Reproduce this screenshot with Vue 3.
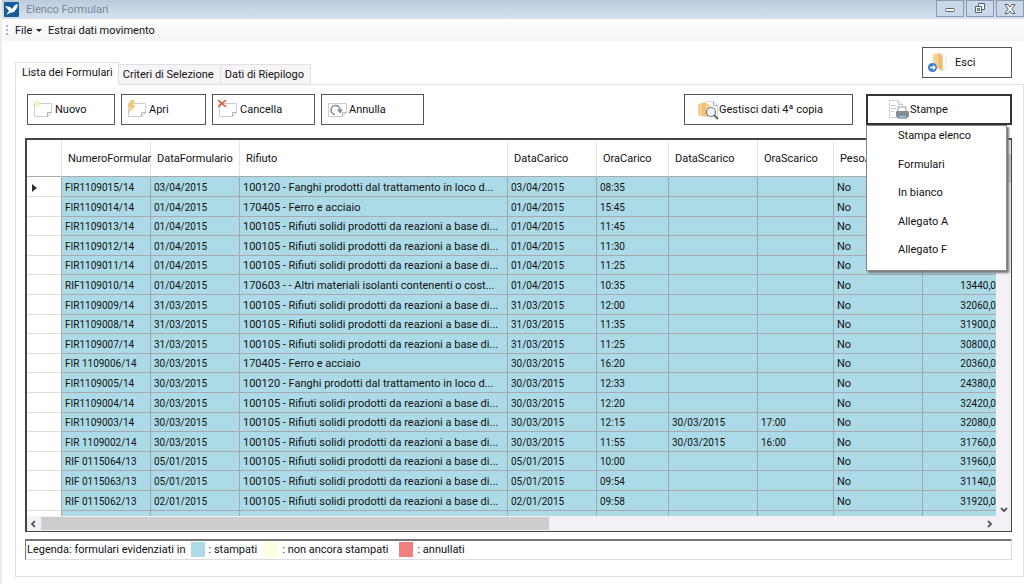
<script setup>
const cols = ['NumeroFormular', 'DataFormulario', 'Rifiuto', 'DataCarico', 'OraCarico', 'DataScarico', 'OraScarico', 'PesoA', '']
const A = '100105 - Rifiuti solidi prodotti da reazioni a base di...'
const B = '100120 - Fanghi prodotti dal trattamento in loco d...'
const F = '170405 - Ferro e acciaio'
const rows = [
  ['FIR1109015/14', '03/04/2015', B, '08:35', '', '', ''],
  ['FIR1109014/14', '01/04/2015', F, '15:45', '', '', ''],
  ['FIR1109013/14', '01/04/2015', A, '11:45', '', '', ''],
  ['FIR1109012/14', '01/04/2015', A, '11:30', '', '', ''],
  ['FIR1109011/14', '01/04/2015', A, '11:25', '', '', ''],
  ['RIF1109010/14', '01/04/2015', '170603 - - Altri materiali isolanti contenenti o cost...', '10:35', '', '', '13440,0'],
  ['FIR1109009/14', '31/03/2015', A, '12:00', '', '', '32060,0'],
  ['FIR1109008/14', '31/03/2015', A, '11:35', '', '', '31900,0'],
  ['FIR1109007/14', '31/03/2015', A, '11:25', '', '', '30800,0'],
  ['FIR 1109006/14', '30/03/2015', F, '16:20', '', '', '20360,0'],
  ['FIR1109005/14', '30/03/2015', B, '12:33', '', '', '24380,0'],
  ['FIR1109004/14', '30/03/2015', A, '12:20', '', '', '32420,0'],
  ['FIR1109003/14', '30/03/2015', A, '12:15', '30/03/2015', '17:00', '32080,0'],
  ['FIR 1109002/14', '30/03/2015', A, '11:55', '30/03/2015', '16:00', '31760,0'],
  ['RIF 0115064/13', '05/01/2015', A, '10:00', '', '', '31960,0'],
  ['RIF 0115063/13', '05/01/2015', A, '09:54', '', '', '31140,0'],
  ['RIF 0115062/13', '02/01/2015', A, '09:58', '', '', '31920,0'],
]
const items = ['Stampa elenco', 'Formulari', 'In bianco', 'Allegato A', 'Allegato F']
</script>

<template>
  <div class="window">
    <header class="title">
      <svg class="logo" width="15" height="15" viewBox="0 0 15 15"><rect width="15" height="15" rx="1" fill="#165c98" /><path d="M1 4l5 1 2 2 3-4 3-1-1 4-3 4-4 1-4 2 3-4z" fill="#fff" /></svg>
      <h1>Elenco Formulari</h1>
      <div class="wbtns">
        <button aria-label="Riduci"><svg width="12" height="10" viewBox="0 0 12 10"><rect x="1.5" y="4.500" width="9" height="3" rx="1" fill="#fff" stroke="#59616e" /></svg></button>
        <button aria-label="Ripristina"><svg width="12" height="11" viewBox="0 0 12 11" fill="#eef2f8" stroke="#59616e"><path d="M4.500 .5h6v6h-6z" /><path d="M1.500 3.500h6v6h-6z" /><path d="M3.500 5.500h2v2h-2z" /></svg></button>
        <button aria-label="Chiudi"><svg width="12" height="10" viewBox="0 0 12 10"><path d="M1 .5h3l2 2.500 2-2.500h3L7.800 5 11 9.500H8L6 7 4 9.500H1L4.200 5z" fill="#fff" stroke="#59616e" /></svg></button>
      </div>
    </header>
    <nav class="menubar">
      <span class="grip"></span>
      <button>File <span class="caret"></span></button>
      <button>Estrai dati movimento</button>
    </nav>

    <main>
      <div class="top">
        <div class="tabs" role="tablist">
          <button role="tab" aria-selected="true" class="tab active">Lista dei Formulari</button>
          <button role="tab" aria-selected="false" class="tab">Criteri di Selezione</button>
          <button role="tab" aria-selected="false" class="tab">Dati di Riepilogo</button>
        </div>
        <button class="btn esci">
          <svg width="20" height="22" viewBox="0 0 20 22"><path d="M12 2h3l3 4v10l-3 2" fill="#fff" stroke="#dfe3ea" /><path d="M5 2l7-1 3 3v15l-6-3H5z" fill="#f6d29a" /><path d="M10 1l4 3v15l-4-3z" fill="#efbd74" /><circle cx="4.500" cy="15.500" r="4.500" fill="#3e7fc9" /><path d="M2 15.500h5M5 13.500l2 2-2 2" fill="none" stroke="#fff" stroke-width="1.300" /></svg>
          Esci
        </button>
      </div>

      <section class="panel">
        <div class="tools">
          <button class="btn w88"><svg width="22" height="20" viewBox="0 0 22 20"><path d="M1.500 3.500h17v9l-4 4h-13z" fill="#fff" stroke="#c9cbd0" /><path d="M18.500 12.500h-4v4" fill="none" stroke="#b0b2b8" /><path d="M4 0v8M0 4h8M1.200 1.200l5.600 5.600M6.800 1.200L1.200 6.800" stroke="#f8dba8" /><circle cx="4" cy="4" r="2" fill="#fff0c5" /></svg>Nuovo</button>
          <button class="btn w85"><svg width="22" height="20" viewBox="0 0 22 20"><path d="M1.500 3.500h17v9l-4 4h-13z" fill="#fff" stroke="#c9cbd0" /><path d="M18.500 12.500h-4v4" fill="none" stroke="#b0b2b8" /><path d="M4 0h4L6 5h3L2 13l1-6H0z" fill="#f4c677" /></svg>Apri</button>
          <button class="btn w103"><svg width="22" height="20" viewBox="0 0 22 20"><path d="M1.500 3.500h17v9l-4 4h-13z" fill="#fff" stroke="#c9cbd0" /><path d="M18.500 12.500h-4v4" fill="none" stroke="#b0b2b8" /><path d="M0 0l8 7M8 0L0 7" stroke="#d9552f" stroke-width="1.500" /></svg>Cancella</button>
          <button class="btn w103"><svg width="22" height="20" viewBox="0 0 22 20"><path d="M1.500 3.500h18v9l-4 4h-14z" fill="#fff" stroke="#c9cbd0" /><path d="M19.500 12.500h-4v4" fill="none" stroke="#b0b2b8" /><path d="M8 14.500a4.500 4.500 0 1 1 5-4" fill="none" stroke="#85888c" stroke-width="1.500" /><path d="M10 9.500h6l-3 4z" fill="#85888c" /></svg>Annulla</button>
          <span class="spacer"></span>
          <button class="btn w169"><svg width="22" height="22" viewBox="0 0 22 22"><path d="M8.500 2.500h8l4 4v11h-12z" fill="#fff" stroke="#d4dae6" /><path d="M16.500 2.500v4h4" fill="none" stroke="#9fb0dc" /><path d="M1 5l4-1v14l-4-2z" fill="#f4cf90" /><path d="M5 4l4-1v15l-4-1z" fill="#f0c37a" /><path d="M9 4l4 2v12l-4-1z" fill="#f6d59c" /><circle cx="14" cy="13" r="4.500" fill="#edf3f7" stroke="#777" stroke-width="1.200" /><path d="M17 16l4 4" stroke="#6d6259" stroke-width="2" /></svg>Gestisci dati 4ª copia</button>
          <div class="dropdown">
            <button class="btn stampe" aria-haspopup="menu" aria-expanded="true"><svg width="22" height="22" viewBox="0 0 22 22"><path d="M1.500 1.500h9l4 4v13h-13z" fill="#fff" stroke="#d0d2d6" /><path d="M10.500 1.500v4h4M3 6.500h5M3 9.500h5M3 12.500h3" fill="none" stroke="#c3c6cb" /><path d="M10 8h8v5h-8z" fill="#fff" stroke="#9399a2" /><rect x="8" y="12" width="13" height="6" rx="1" fill="#858c96" /><path d="M10 16h9v3h-9z" fill="#9cc3e3" stroke="#71777f" /></svg>Stampe</button>
            <ul class="menu" role="menu">
              <li v-for="i in items" :key="i" role="none"><button role="menuitem">{{ i }}</button></li>
            </ul>
          </div>
        </div>

        <div class="grid">
          <div class="view">
            <table>
              <colgroup><col class="c35"><col class="c89"><col class="c89"><col class="c268"><col class="c89"><col class="c72"><col class="c89"><col class="c76"><col class="c89"><col></colgroup>
              <thead>
                <tr><th></th><th v-for="(c, i) in cols" :key="i" scope="col"><span>{{ c }}</span></th></tr>
              </thead>
              <tbody>
                <tr v-for="(r, i) in rows" :key="i">
                  <th scope="row"><svg v-if="i === 0" width="6" height="8" viewBox="0 0 6 8"><path d="M0 0l5 4-5 4z" fill="#333" /></svg></th>
                  <td class="code">{{ r[0] }}</td><td class="code">{{ r[1] }}</td><td>{{ r[2] }}</td><td class="code">{{ r[1] }}</td><td class="code">{{ r[3] }}</td><td class="code">{{ r[4] }}</td><td class="code">{{ r[5] }}</td><td>No</td><td class="code num">{{ r[6] }}</td>
                </tr>
                <tr class="cut"><th></th><td v-for="n in 9" :key="n"></td></tr>
              </tbody>
            </table>
          </div>
          <div class="vbar"><span class="vthumb"></span><svg width="8" height="6" viewBox="0 0 8 6"><path d="M1 1l3 3 3-3" fill="none" stroke="#444" stroke-width="1.700" /></svg></div>
          <div class="hbar">
            <svg width="6" height="8" viewBox="0 0 6 8"><path d="M5 1L2 4l3 3" fill="none" stroke="#444" stroke-width="1.700" /></svg>
            <span class="track"><span class="hthumb"></span></span>
            <svg width="6" height="8" viewBox="0 0 6 8"><path d="M1 1l3 3-3 3" fill="none" stroke="#444" stroke-width="1.700" /></svg>
          </div>
        </div>

        <div class="legend">
          <span>Legenda: formulari evidenziati in</span><i class="sw blue"></i><span class="l1">: stampati</span><i class="sw yellow"></i><span class="l2">: non ancora stampati</span><i class="sw red"></i><span>: annullati</span>
        </div>
      </section>
    </main>
  </div>
</template>

<style>
body { margin: 0; background: #fff; }
</style>
<style scoped>
* { box-sizing: border-box; }
.window { min-height: 100vh; font: 11px/14px Roboto, sans-serif; color: #111; background: #fff; border-left: 2px solid #eeede6; overflow: hidden; }
button { font: inherit; color: inherit; border: 0; background: none; padding: 0; white-space: nowrap; }
.title { display: flex; align-items: center; height: 19px; padding-left: 2px; background: linear-gradient(#bccbdd, #d5e1f0); }
.title h1 { margin: 0 0 0 7px; font: 11px/16px Roboto, sans-serif; color: #7c8795; flex: 1; }
.wbtns { display: flex; gap: 2px; align-self: flex-start; }
.wbtns button { width: 28px; height: 17px; display: grid; place-items: center; border: 1px solid #8a9bb2; background: #c9d7e8; }
.menubar { display: flex; align-items: center; height: 22px; padding: 2px 0 0 4px; background: linear-gradient(#fdfcfd, #f6f4f6); }
.grip { width: 2px; height: 12px; margin-right: 7px; background: repeating-linear-gradient(#b5b5ba 0 2px, transparent 2px 4px); }
.menubar button + button { margin-left: 6px; }
.caret { display: inline-block; border: 3px solid transparent; border-top-color: #222; border-bottom: 0; margin: 0 0 2px 1px; }
main { padding: 6px 0 7px 13px; }
.top { display: flex; justify-content: space-between; align-items: flex-end; padding-right: 12px; height: 37px; }
.tabs { display: flex; align-items: flex-end; height: 22px; }
.tab { height: 20px; padding: 0 6px 0 4px; background: #f7f4f8; border: 1px solid #e2e0e4; border-left: 0; border-bottom: 0; }
.tab.active { height: 23px; padding: 0 5px 2px 6px; background: #fff; border-left: 1px solid #e2e0e4; position: relative; z-index: 1; margin-bottom: -1px; }
.btn { display: flex; align-items: center; height: 31px; border: 1px solid #555; background: #fff; padding: 0 0 0 5px; }
.btn svg { flex: none; }
.esci { width: 90px; align-self: flex-start; }
.esci svg { margin-right: 7px; }
.panel { border: 1px solid #e0e0e2; padding: 9px 11px 16px 9px; }
.tools { display: flex; gap: 6px; padding-left: 2px; }
.w88 { width: 88px; } .w85 { width: 85px; } .w103 { width: 103px; } .w169 { width: 169px; padding-left: 12px; margin-right: 7px; }
.spacer { flex: 1; }
.dropdown { position: relative; }
.stampe { width: 146px; border: 2px solid #333; padding-left: 20px; }
.menu { position: absolute; z-index: 5; top: 31px; left: 0; width: 141px; height: 146px; margin: 0; padding: 3px 0 13px; list-style: none; background: #fff; border: 1px solid #888; box-shadow: 2px 2px 2px #777; display: flex; flex-direction: column; justify-content: space-between; }
.menu button { display: block; width: 100%; text-align: left; padding-left: 31px; }
.grid { margin-top: 13px; border: 2px solid #444; border-width: 2px 1px 1px 2px; display: grid; grid-template-columns: minmax(0, 1fr) 15px; background: #f3f1f5; }
.view { overflow: hidden; }
table { width: 100%; table-layout: fixed; border-collapse: separate; border-spacing: 0; }
.c35 { width: 35px; } .c89 { width: 89px; } .c268 { width: 268px; } .c72 { width: 72px; } .c76 { width: 76px; }
th, td { padding: 2px 0 0; font-weight: 400; text-align: left; white-space: nowrap; line-height: 14px; }
thead th { height: 37px; background: #fff; border-right: 1px solid #e5e5e8; border-bottom: 1px solid #aaa; }
thead span { display: block; margin-left: 6px; }
tbody tr { height: 20px; }
tbody tr:nth-child(5n + 3), tbody tr:nth-child(5n) { height: 19px; }
tbody th { background: #fff; border-right: 1px solid #aaa; border-bottom: 1px solid #ddd; padding-left: 5px; }
tbody th svg { display: block; }
tbody td { background: #acdbe7; border-right: 1px solid #98a9b5; border-bottom: 1px solid #a9a8b2; padding-left: 3px; overflow: hidden; }
td:last-child, th:last-child { border-right: 0; }
.code { font-size: 10px; }
.num { text-align: right; }
tbody tr.cut { height: 5px; }
.cut th, .cut td { border-bottom: 0; }
.vbar { display: flex; flex-direction: column; align-items: center; justify-content: space-between; padding: 14px 0 3px; }
.vthumb { width: 15px; height: 29px; background: #cdcdcd; }
.hbar { grid-column: 1 / -1; height: 15px; display: flex; align-items: center; padding: 0 18px 0 3px; gap: 5px; }
.track { flex: 1; height: 13px; }
.hthumb { display: block; width: 54%; height: 100%; background: #cdcdcd; }
.legend { margin-top: 7px; height: 21px; display: flex; align-items: center; border: 1px solid #ddd; border-top: 2px solid #777; border-left-color: #777; padding: 0 0 1px 1px; }
.sw { width: 14px; height: 15px; margin: 0 4px; }
.blue { background: #acdbe7; margin-left: 5px; } .yellow { background: #fffee0; } .red { background: #f08080; }
.l1 { margin-right: 3px; } .l2 { margin-right: 7px; }
</style>
